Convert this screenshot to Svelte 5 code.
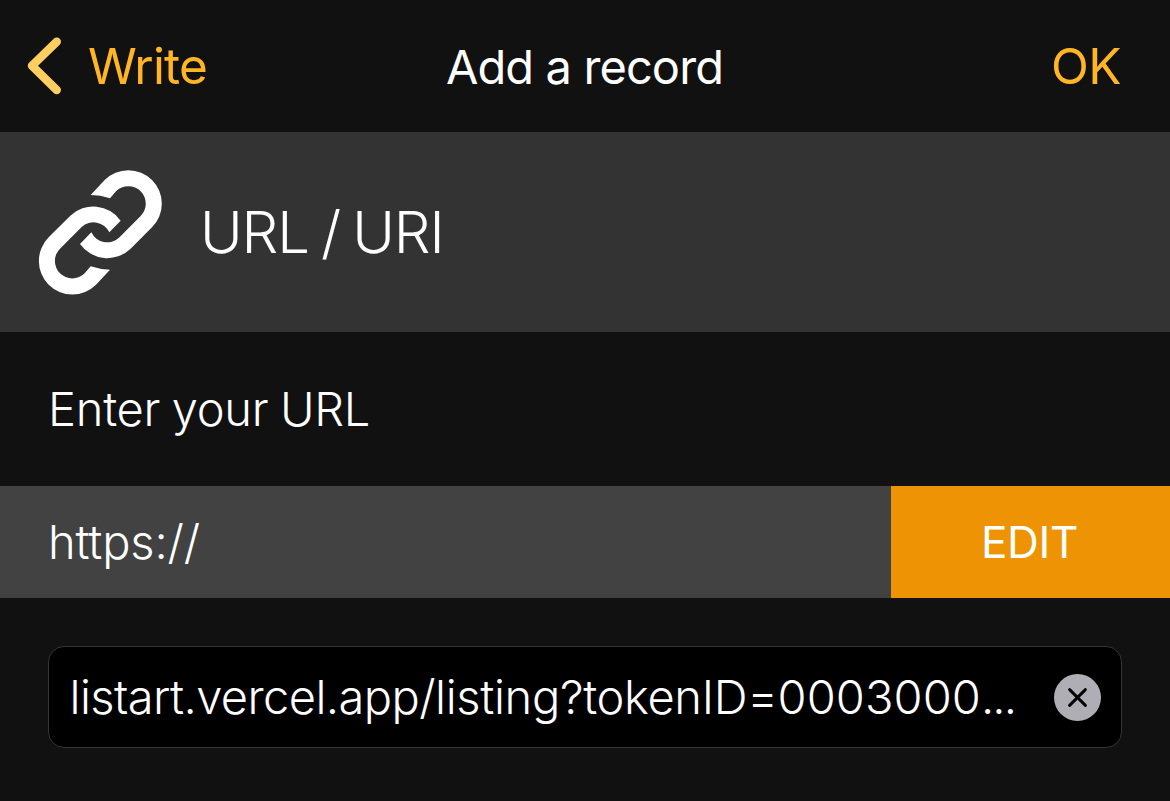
<script>
  let url = $state({ host: 'listart.vercel.app/', query: 'listing?tokenID=', token: '0003000', more: '...' });
  const link =
    'M212 135L254 90A100.4 100.4 0 0 1 396 232L331 297A100.4 100.4 0 0 1 180 282L214 247A52.3 52.3 0 0 0 297 263L362 198A52.3 52.3 0 0 0 288 124L270 145Q241 135 212 135Z';
</script>

<main>
  <header>
    <button class="back" aria-label="Back">
      <svg width="36" height="60" viewBox="0 0 36 60" fill="none" stroke="#ffce60" stroke-width="8.5" stroke-linecap="round" stroke-linejoin="round">
        <path d="M30.7 5.7L6 29.8L30.7 54" />
      </svg>
      <span class="write">Write</span>
    </button>
    <h1>Add a record</h1>
    <button class="ok"><span>OK</span></button>
  </header>

  <section class="type">
    <svg width="126" height="126" viewBox="54 57 378 378" fill="#fff">
      <path d={link} />
      <path d={link} transform="rotate(180 241 247)" />
    </svg>
    <h2>URL / URI</h2>
  </section>

  <p class="label"><span>Enter your URL</span></p>

  <div class="scheme">
    <div class="prefix"><span>https://</span></div>
    <button class="edit"><span>EDIT</span></button>
  </div>

  <div class="field">
    <span class="value"><span class="host">{url.host}</span><span class="query">{url.query}</span><span class="token">{url.token}</span><span class="more">{url.more}</span></span>
    <button class="clear" aria-label="Clear" onclick={() => (url = { host: '', query: '', token: '', more: '' })}>
      <svg width="47" height="47" viewBox="0 0 47 47">
        <circle cx="23.5" cy="23.5" r="23.5" fill="#aeaeb4" />
        <path d="M15.6 15.6L31.4 31.4M31.4 15.6L15.6 31.4" fill="none" stroke="#000" stroke-width="2.9" stroke-linecap="round" />
      </svg>
    </button>
  </div>
</main>

<style>
  :global(body) {
    background: #111;
  }
  main {
    height: 801px;
    overflow: hidden;
    background: #111;
    color: #fff;
    font-family: Inter, 'Liberation Sans', sans-serif;
    font-weight: 300;
    white-space: nowrap;
  }
  button {
    display: flex;
    align-items: center;
    margin: 0;
    padding: 0;
    border: 0;
    background: none;
    color: inherit;
    font: inherit;
  }
  h1,
  h2,
  p {
    margin: 0;
    font-weight: inherit;
  }
  svg {
    display: block;
    flex: none;
  }
  header {
    display: grid;
    grid-template-columns: 1fr auto 1fr;
    align-items: center;
    height: 132px;
    padding: 0 49px 0 26px;
    box-sizing: border-box;
    color: #ffb524;
    font-size: 49.5px;
    font-weight: 400;
  }
  .write {
    margin-left: 26px;
    letter-spacing: -0.8px;
  }
  h1 {
    margin: 0 0 0 22px;
    color: #fff;
    font-size: 47px;
    font-weight: 400;
    letter-spacing: -0.9px;
  }
  .ok {
    justify-self: end;
    letter-spacing: -0.5px;
  }
  .type {
    display: flex;
    align-items: center;
    height: 200px;
    padding-left: 38px;
    background: #333;
  }
  h2 {
    margin-left: 36px;
    font-size: 58px;
    letter-spacing: -1.1px;
    word-spacing: -3.1px;
  }
  .label {
    display: flex;
    align-items: center;
    height: 154px;
    padding: 0 0 2px 48px;
    box-sizing: border-box;
    font-size: 47px;
    letter-spacing: -0.25px;
    word-spacing: -1.4px;
  }
  .scheme {
    display: flex;
    height: 112px;
  }
  .prefix {
    display: flex;
    flex: 1;
    align-items: center;
    padding: 0 0 2px 48px;
    background: #424242;
    font-size: 47px;
    letter-spacing: -0.15px;
  }
  .edit {
    justify-content: center;
    width: 279px;
    padding-right: 2px;
    box-sizing: border-box;
    background: #ee9404;
    font-size: 44px;
    font-weight: 400;
    letter-spacing: -0.3px;
  }
  .field {
    display: flex;
    align-items: center;
    justify-content: space-between;
    height: 102px;
    margin: 48px 48px 0;
    padding: 0 20px;
    box-sizing: border-box;
    border: 1px solid #353535;
    border-radius: 16px;
    background: #000;
    font-size: 47px;
  }
  .value {
    padding: 0 0 2px 0.5px;
  }
  .host {
    letter-spacing: -0.57px;
  }
  .query {
    letter-spacing: -0.32px;
  }
  .token {
    letter-spacing: 0.1px;
  }
  .more {
    letter-spacing: -1.9px;
  }
</style>
